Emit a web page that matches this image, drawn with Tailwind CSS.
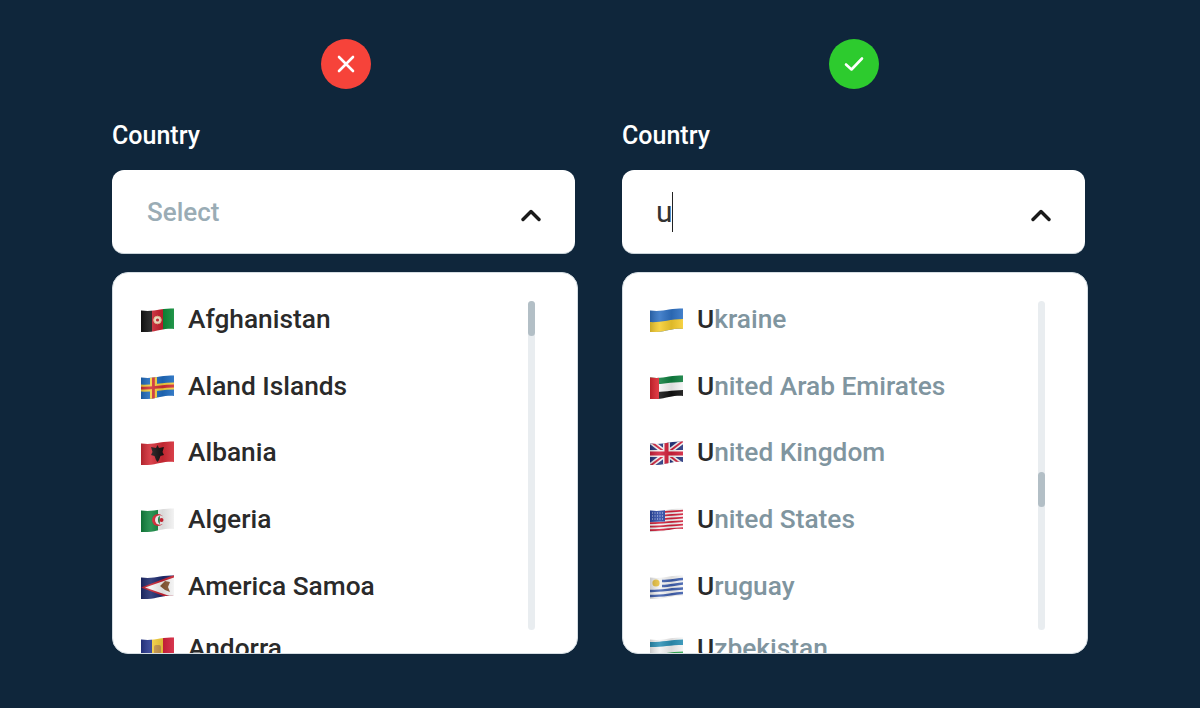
<!DOCTYPE html>
<html lang="en">
<head>
  <meta charset="UTF-8">
  <title>Country select</title>
  <script src="https://cdn.jsdelivr.net/npm/@tailwindcss/browser@4"></script>
</head>
<body class="bg-[#0f263b] h-[708px] overflow-hidden font-['Roboto',sans-serif]">
  <svg width="0" height="0" class="absolute">
    <defs>
      <clipPath id="wave"><path d="M0 2.500C8 3.500 14 2.500 19 1.500S29 .5 33 .5V21C29 20.500 24 21 19 22S8 24.500 0 24Z"/></clipPath>
      <linearGradient id="fold" x1="0" x2="1" y1="0" y2="0">
        <stop offset="0" stop-color="#000" stop-opacity=".18"/>
        <stop offset=".3" stop-color="#fff" stop-opacity=".12"/>
        <stop offset=".65" stop-color="#000" stop-opacity=".1"/>
        <stop offset="1" stop-color="#fff" stop-opacity=".1"/>
      </linearGradient>
    </defs>
  </svg>

  <div class="flex gap-[44px] pl-[112px] pt-[39px]">

    <!-- wrong -->
    <div class="w-[466px]">
      <div class="w-[50px] h-[50px] ml-[209px] rounded-full bg-[#f6433a] flex items-center justify-center">
        <svg width="18" height="18" viewBox="0 0 18 18" fill="none" stroke="#fff" stroke-width="2.600" stroke-linecap="round"><path d="M2 2l14 14M16 2L2 16"/></svg>
      </div>
      <div class="mt-[32px] mb-[19px] h-[30px] leading-[30px] text-[25px] font-medium text-white">Country</div>
      <div class="w-[463px] h-[84px] bg-white rounded-[12px] border-b border-[#c9d3d9] flex items-center justify-between pl-[35px] pr-[34px]">
        <span class="mt-[2px] text-[26px] font-medium text-[#9aacb5]">Select</span>
        <svg class="mt-[6px]" width="20" height="14" viewBox="0 0 20 14" fill="none" stroke="#1a1a1a" stroke-width="3.400" stroke-linecap="round" stroke-linejoin="round"><path d="M2 11.500L10 3.500L18 11.500"/></svg>
      </div>
      <div class="relative mt-[18px] h-[382px] bg-white rounded-[16px] border border-[#d5dde2] overflow-hidden pt-[13px] text-[26.300px] font-medium text-[#2a2a2a]">
        <div class="h-[67px] flex items-center gap-[14px] pl-[28px]">
          <svg class="shrink-0" width="33" height="24" viewBox="0 0 33 24"><g clip-path="url(#wave)"><rect width="11" height="25" fill="#111"/><rect x="11" width="11" height="25" fill="#c8202f"/><rect x="22" width="11" height="25" fill="#0a8a36"/><circle cx="16.500" cy="12" r="3.800" fill="#f6e3c8" stroke="#e8b98a" stroke-width="1"/><circle cx="16.500" cy="12" r="1.600" fill="#c8202f"/><rect width="33" height="25" fill="url(#fold)"/></g></svg>
          <span>Afghanistan</span>
        </div>
        <div class="h-[67px] flex items-center gap-[14px] pl-[28px]">
          <svg class="shrink-0" width="33" height="24" viewBox="0 0 33 24"><g clip-path="url(#wave)"><rect width="33" height="25" fill="#1f6cc0"/><path d="M-1 13C10 14 20 11 34 11" fill="none" stroke="#f5cf3c" stroke-width="7"/><rect x="9" width="7" height="25" fill="#f5cf3c"/><path d="M-1 13C10 14 20 11 34 11" fill="none" stroke="#d22f36" stroke-width="2.800"/><rect x="11" width="2.800" height="25" fill="#d22f36"/><rect width="33" height="25" fill="url(#fold)"/></g></svg>
          <span>Aland Islands</span>
        </div>
        <div class="h-[66px] flex items-center gap-[14px] pl-[28px]">
          <svg class="shrink-0" width="33" height="24" viewBox="0 0 33 24"><g clip-path="url(#wave)"><rect width="33" height="25" fill="#d42a35"/><path d="M16.500 4L18 7L23 6L21.500 11L23 14L19.500 15L18 19L16.500 21L15 19L13.500 15L10 14L11.500 11L10 6L15 7Z" fill="#1a1214"/><rect width="33" height="25" fill="url(#fold)"/></g></svg>
          <span>Albania</span>
        </div>
        <div class="h-[67px] flex items-center gap-[14px] pl-[28px]">
          <svg class="shrink-0" width="33" height="24" viewBox="0 0 33 24"><g clip-path="url(#wave)"><rect width="17" height="25" fill="#11863f"/><rect x="17" width="16" height="25" fill="#f1f1f1"/><circle cx="17" cy="12" r="6" fill="#d3212f"/><circle cx="18.800" cy="12" r="4.800" fill="#f1f1f1"/><path d="M17 12a4.800 4.800 0 0 1 1.800-4.400V16.400A4.800 4.800 0 0 1 17 12Z" fill="#11863f"/><circle cx="20.500" cy="12" r="2" fill="#d3212f"/><rect width="33" height="25" fill="url(#fold)"/></g></svg>
          <span>Algeria</span>
        </div>
        <div class="h-[67px] flex items-center gap-[14px] pl-[28px]">
          <svg class="shrink-0" width="33" height="24" viewBox="0 0 33 24"><g clip-path="url(#wave)"><rect width="33" height="25" fill="#1d2a6e"/><path d="M0 12.500L33 0V25Z" fill="#c5202f"/><path d="M4 12.500L33 2.500V22.500Z" fill="#f4f4f4"/><path d="M19 11L24 6L29 7L27 12L29 17L24 15Z" fill="#8a5a35"/><rect width="33" height="25" fill="url(#fold)"/></g></svg>
          <span>America Samoa</span>
        </div>
        <div class="-mt-[5px] h-[67px] flex items-center gap-[14px] pl-[28px]">
          <svg class="shrink-0" width="33" height="24" viewBox="0 0 33 24"><g clip-path="url(#wave)"><rect width="11" height="25" fill="#27368f"/><rect x="11" width="11" height="25" fill="#f5cf3c"/><rect x="22" width="11" height="25" fill="#d3203b"/><rect x="13" y="8" width="7" height="9" rx="2" fill="#c7954a"/><rect width="33" height="25" fill="url(#fold)"/></g></svg>
          <span>Andorra</span>
        </div>
        <div class="absolute left-[415px] top-[28px] w-[7px] h-[329px] rounded-full bg-[#e9edf0]">
          <div class="w-[7px] h-[35px] rounded-full bg-[#b3bfc6]"></div>
        </div>
      </div>
    </div>

    <!-- right -->
    <div class="w-[466px]">
      <div class="w-[50px] h-[50px] ml-[207px] rounded-full bg-[#2dcb2e] flex items-center justify-center">
        <svg width="20" height="16" viewBox="0 0 20 16" fill="none" stroke="#fff" stroke-width="2.600" stroke-linecap="round" stroke-linejoin="round"><path d="M2 8.500L7.500 13.500L18 2.500"/></svg>
      </div>
      <div class="mt-[32px] mb-[19px] h-[30px] leading-[30px] text-[25px] font-medium text-white">Country</div>
      <div class="w-[463px] h-[84px] bg-white rounded-[12px] border-b border-[#c9d3d9] flex items-center justify-between pl-[34px] pr-[34px]">
        <span class="flex items-center text-[30px] text-[#333]">u<span class="-ml-[1px] w-[1.500px] h-[40px] bg-[#222]"></span></span>
        <svg class="mt-[6px]" width="20" height="14" viewBox="0 0 20 14" fill="none" stroke="#1a1a1a" stroke-width="3.400" stroke-linecap="round" stroke-linejoin="round"><path d="M2 11.500L10 3.500L18 11.500"/></svg>
      </div>
      <div class="relative mt-[18px] h-[382px] bg-white rounded-[16px] border border-[#d5dde2] overflow-hidden pt-[13px] text-[26.300px] font-medium text-[#80959f]">
        <div class="h-[67px] flex items-center gap-[14px] pl-[27px]">
          <svg class="shrink-0" width="33" height="24" viewBox="0 0 33 24"><g clip-path="url(#wave)"><rect width="33" height="25" fill="#2f72c4"/><path d="M-1 14C10 15 20 11 34 11V26H-1Z" fill="#f6cd2e"/><rect width="33" height="25" fill="url(#fold)"/></g></svg>
          <span><span class="text-[#2a2a2a]">U</span>kraine</span>
        </div>
        <div class="h-[67px] flex items-center gap-[14px] pl-[27px]">
          <svg class="shrink-0" width="33" height="24" viewBox="0 0 33 24"><g clip-path="url(#wave)"><rect width="33" height="9" fill="#0f7f3f"/><path d="M-1 9.500C10 10 20 7 34 7V15C20 15 10 18 -1 17Z" fill="#f4f4f4"/><path d="M-1 17C10 18 20 15 34 15V26H-1Z" fill="#111"/><rect width="9" height="25" fill="#e0252f"/><rect width="33" height="25" fill="url(#fold)"/></g></svg>
          <span><span class="text-[#2a2a2a]">U</span>nited Arab Emirates</span>
        </div>
        <div class="h-[66px] flex items-center gap-[14px] pl-[27px]">
          <svg class="shrink-0" width="33" height="24" viewBox="0 0 33 24"><g clip-path="url(#wave)"><rect width="33" height="25" fill="#27367f"/><path d="M0 0L33 25M33 0L0 25" stroke="#f4f4f4" stroke-width="5"/><path d="M0 0L33 25M33 0L0 25" stroke="#d3203b" stroke-width="1.800"/><path d="M16.500 0V25M0 12.500H33" stroke="#f4f4f4" stroke-width="7"/><path d="M16.500 0V25M0 12.500H33" stroke="#d3203b" stroke-width="4"/><rect width="33" height="25" fill="url(#fold)"/></g></svg>
          <span><span class="text-[#2a2a2a]">U</span>nited Kingdom</span>
        </div>
        <div class="h-[67px] flex items-center gap-[14px] pl-[27px]">
          <svg class="shrink-0" width="33" height="24" viewBox="0 0 33 24"><g clip-path="url(#wave)"><rect width="33" height="25" fill="#f4f4f4"/><path d="M-1 4.500C10 5 20 3 34 2.500M-1 8C10 8.500 20 6.500 34 6M-1 11.500C10 12 20 10 34 9.500M-1 15C10 15.500 20 13.500 34 13M-1 18.500C10 19 20 17 34 16.500M-1 22C10 22.500 20 20.500 34 20" fill="none" stroke="#d3203b" stroke-width="1.800"/><path d="M0 1H15V13.500L0 14Z" fill="#2c4aa8"/><path d="M2 5h11M2 8h11M2 11h11" stroke="#cfd8f0" stroke-width="1" stroke-dasharray="1 1.500"/><rect width="33" height="25" fill="url(#fold)"/></g></svg>
          <span><span class="text-[#2a2a2a]">U</span>nited States</span>
        </div>
        <div class="h-[67px] flex items-center gap-[14px] pl-[27px]">
          <svg class="shrink-0" width="33" height="24" viewBox="0 0 33 24"><g clip-path="url(#wave)"><rect width="33" height="25" fill="#f4f4f4"/><path d="M12 6C20 6 26 4.500 34 4M12 11C20 11 26 9 34 8.500M-1 16C10 16.500 20 14 34 13.500M-1 21C10 21.500 20 19 34 18" fill="none" stroke="#3f5fae" stroke-width="2.400"/><circle cx="6" cy="8" r="3.600" fill="#e9c23f"/><rect width="33" height="25" fill="url(#fold)"/></g></svg>
          <span><span class="text-[#2a2a2a]">U</span>ruguay</span>
        </div>
        <div class="-mt-[5px] h-[67px] flex items-center gap-[14px] pl-[27px]">
          <svg class="shrink-0" width="33" height="24" viewBox="0 0 33 24"><g clip-path="url(#wave)"><rect width="33" height="25" fill="#f4f4f4"/><path d="M-1 5C10 5.500 20 3 34 2.500V8C20 8 10 10.500 -1 10Z" fill="#2b90b5"/><path d="M-1 17C10 17.500 20 15 34 14.500V26H-1Z" fill="#2fa84f"/><rect width="33" height="25" fill="url(#fold)"/></g></svg>
          <span><span class="text-[#2a2a2a]">U</span>zbekistan</span>
        </div>
        <div class="absolute left-[415px] top-[28px] w-[7px] h-[329px] rounded-full bg-[#e9edf0]">
          <div class="w-[7px] h-[35px] mt-[171px] rounded-full bg-[#b3bfc6]"></div>
        </div>
      </div>
    </div>

  </div>
</body>
</html>
